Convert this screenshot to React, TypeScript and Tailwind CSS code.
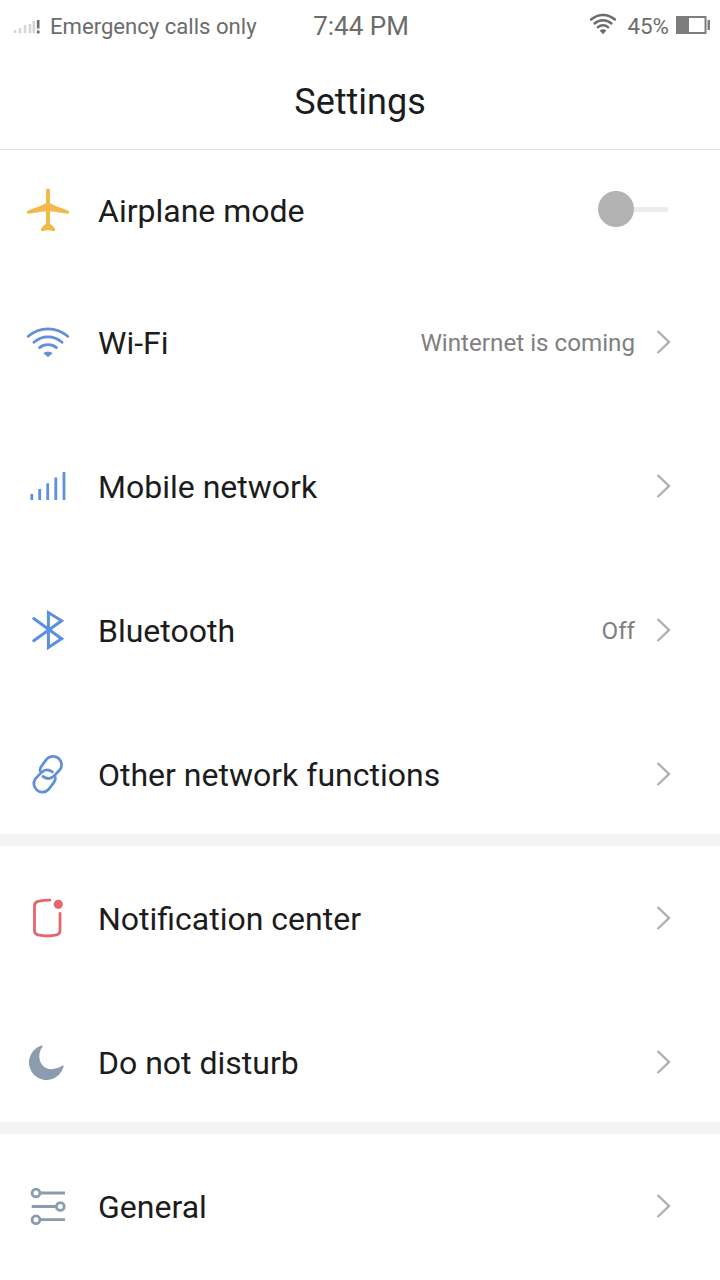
import { ReactNode } from "react";

interface SettingRowProps {
  icon: ReactNode;
  title: string;
  value?: string;
}

function Icon({ color, children }: { color: string; children: ReactNode }) {
  return (
    <svg
      className={`h-12 w-12 shrink-0 ${color}`}
      viewBox="0 0 48 48"
      fill="none"
      stroke="currentColor"
      strokeWidth="2.8"
      strokeLinecap="round"
      strokeLinejoin="round"
    >
      {children}
    </svg>
  );
}

const AirplaneIcon = () => (
  <Icon color="text-[#efba4c]">
    <path
      fill="currentColor"
      stroke="none"
      d="M24 2.5c1.3 0 2 1.1 2 2.7v11.9l3.4 2 14.4 5.3c1.2.5 1.6 1.5 1.3 2.4-.3.9-1.1 1.2-2.3 1L29 25.4l-3 .2v12l4.6 4.4c1.2 1.4.5 3.2-.9 3.2-1.800 0-3.600-1.200-5.700-1.200s-3.900 1.200-5.700 1.200c-1.400 0-2.100-1.800-.9-3.200L22 37.600v-12l-3-.2-13.800 2.400c-1.200.2-2-.1-2.300-1-.3-.9.100-1.900 1.300-2.400l14.400-5.300 3.400-2V5.200c0-1.600.7-2.700 2-2.700z"
    />
  </Icon>
);

const WifiIcon = () => (
  <Icon color="text-[#5f90d8]">
    <path d="M4.200 18.300Q13 10.800 24 10.800T43.800 18.300" />
    <path d="M9.900 24.300Q16 18.800 24 18.800T38.100 24.300" />
    <path d="M15.600 29.600Q19 26.700 24 26.700T32.400 29.600" />
    <path fill="currentColor" stroke="none" d="M19.300 35Q24 32 28.700 35L24 39.200z" />
  </Icon>
);

const SignalIcon = () => (
  <Icon color="text-[#5f90d8]">
    <path strokeLinecap="butt" d="M7.800 38v-6M15.700 38V27M23.700 38V21.300M31.800 38V15.400M40 38V10" />
  </Icon>
);

const BluetoothIcon = () => (
  <Icon color="text-[#5a90de]">
    <path strokeLinejoin="miter" strokeWidth="3" d="M9.700 12.500 37.600 32.700l-13.200 8.700V6.600L37.600 14.800 9.700 34.700" />
  </Icon>
);

const LinkIcon = () => (
  <Icon color="text-[#5f90d8]">
    <path d="M16 20.700Q15.800 18 18 15.300L22.900 8.900A8.500 8.500 0 0 1 36.100 19.500L30 26Q25 30.800 19 26.500" />
    <path d="M31.400 27.700Q31.600 30.400 29.400 33.100L24.500 39.500A8.500 8.500 0 0 1 11.300 28.900L17.400 22.400Q22.400 17.600 28.400 21.900" />
  </Icon>
);

const NotificationIcon = () => (
  <Icon color="text-[#e5676b]">
    <path d="M26 6.100Q19.500 6.100 14 7.300 10.500 8.200 10.500 12v24.700Q10.500 40 14 40.900 23.400 43.100 32.500 40.900 36 40 36 36.700V19.300" />
    <circle cx="34.300" cy="10.300" r="4.600" fill="currentColor" stroke="none" />
  </Icon>
);

const MoonIcon = () => (
  <Icon color="text-[#8c9bae]">
    <path
      fill="currentColor"
      stroke="none"
      d="M16.800 7.700c1.300-.6 2.200.1 1.500 1.400C11 20 18 31.200 27.500 31.200Q33 31.200 37.600 27.900c1.400-.8 2.400-.1 1.900 1.200A17.600 17.600 0 1 1 16.800 7.700z"
    />
  </Icon>
);

const SlidersIcon = () => (
  <Icon color="text-[#8c9bae]">
    <circle cx="12" cy="11" r="3.900" />
    <path strokeLinecap="butt" d="M16 11h25M7.700 24.500h24.600M16 37.700h25" />
    <circle cx="36.300" cy="24.500" r="3.900" />
    <circle cx="12" cy="37.700" r="3.900" />
  </Icon>
);

function Chevron() {
  return (
    <svg className="h-6 w-4 shrink-0" viewBox="0 0 16 24" fill="none" stroke="#b0b0b0" strokeWidth="2.4">
      <path d="M1.500 1 13 12 1.500 23" />
    </svg>
  );
}

function SettingRow({ icon, title, value }: SettingRowProps) {
  return (
    <div className="flex h-36 items-center pr-12 pl-6">
      {icon}
      <p className="ml-[26px] flex-1 pt-0.5 text-[32px] leading-10">{title}</p>
      {value && <p className="mr-[21px] pt-0.5 text-[24.2px] leading-8 text-[#808080]">{value}</p>}
      <Chevron />
    </div>
  );
}

function StatusBar() {
  return (
    <div className="grid h-[50px] grid-cols-[1fr_auto_1fr] items-center pt-[3px] pr-2.5 pl-3 text-[#6c6c6c]">
      <div className="flex items-center">
        <svg className="h-6 w-[30px]" viewBox="0 0 30 24">
          <path
            d="M3 19v-3M8 19v-5M13 19v-8M18 19v-9M21.800 19v-12"
            stroke="#d4d4d4"
            strokeWidth="2.5"
          />
          <path d="M26.200 6v8.500M26.200 16.500v3" stroke="#6c6c6c" strokeWidth="2.6" />
        </svg>
        <span className="ml-2 text-[22.1px]">Emergency calls only</span>
      </div>
      <span className="text-[26px]">7:44 PM</span>
      <div className="flex items-center justify-end">
        <svg className="mb-1 h-6 w-7" viewBox="0 0 28 24" fill="none" stroke="currentColor" strokeWidth="2.4" strokeLinecap="round">
          <path d="M2 7.500Q7.500 3 14 3T26 7.500M5.500 11.500Q9.300 8.200 14 8.200T22.500 11.500M8.800 15.300Q11 13.300 14 13.300T19.200 15.300" />
          <path fill="currentColor" stroke="none" d="M10.600 18.600Q14 16 17.400 18.600L14 22.300z" />
        </svg>
        <span className="mr-[7px] ml-2.5 text-[22.4px]">45%</span>
        <svg className="mb-0.5 h-[18px] w-[34px]" viewBox="0 0 34 18" fill="#7d7d7d">
          <rect x="1" y="1" width="28.500" height="16" fill="none" stroke="#7d7d7d" strokeWidth="2" />
          <rect x="1" y="1" width="12" height="16" />
          <rect x="31.500" y="4" width="2.500" height="10" />
        </svg>
      </div>
    </div>
  );
}

export default function App() {
  return (
    <div className="h-[1280px] w-[720px] overflow-hidden bg-white font-['Roboto',sans-serif] whitespace-nowrap text-[#1c1c1c]">
      <StatusBar />
      <header className="flex h-[100px] items-center justify-center border-b border-[#e2e2e2] pt-1">
        <h1 className="text-4xl">Settings</h1>
      </header>

      <div className="flex h-[120px] items-center pr-[52px] pl-6">
        <AirplaneIcon />
        <p className="ml-[26px] flex-1 pt-0.5 text-[32px] leading-10">Airplane mode</p>
        <div className="mb-0.5 flex items-center">
          <div className="h-9 w-9 rounded-full bg-[#b3b3b3]" />
          <div className="h-[5px] w-[34px] rounded-r-full bg-[#ebebeb]" />
        </div>
      </div>
      <SettingRow icon={<WifiIcon />} title="Wi-Fi" value="Winternet is coming" />
      <SettingRow icon={<SignalIcon />} title="Mobile network" />
      <SettingRow icon={<BluetoothIcon />} title="Bluetooth" value="Off" />
      <SettingRow icon={<LinkIcon />} title="Other network functions" />
      <div className="-mt-3 h-3 bg-[#f4f4f4]" />

      <SettingRow icon={<NotificationIcon />} title="Notification center" />
      <SettingRow icon={<MoonIcon />} title="Do not disturb" />
      <div className="-mt-3 h-3 bg-[#f4f4f4]" />

      <SettingRow icon={<SlidersIcon />} title="General" />
    </div>
  );
}
